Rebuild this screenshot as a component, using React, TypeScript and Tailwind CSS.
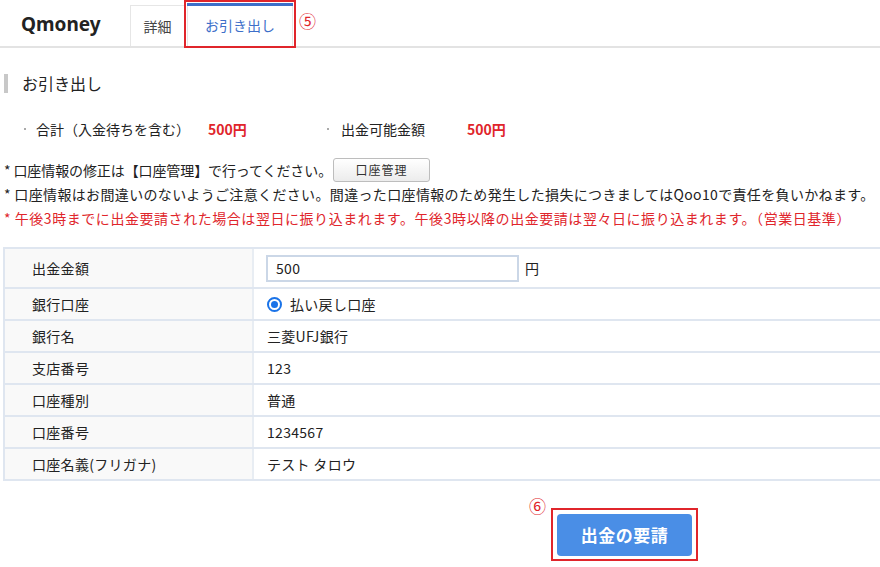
import React from "react";

export default function App() {
  const font = { fontFamily: '"Noto Sans CJK JP", "Noto Sans", sans-serif' };
  const dataRows: [string, string][] = [
    ["銀行名", "三菱UFJ銀行"],
    ["支店番号", "123"],
    ["口座種別", "普通"],
    ["口座番号", "1234567"],
    ["口座名義(フリガナ)", "テスト タロウ"],
  ];
  return (
    <div className="w-[880px] h-[567px] bg-white text-[#222] overflow-hidden" style={font}>
      {/* header */}
      <div className="relative flex items-end h-[48px] border-b-2 border-[#e3e3e3]">
        <div className="w-[130px] pl-[21px] pb-[8px] text-[19px] font-bold text-[#222]" style={{ fontFamily: '"Noto Sans", "Noto Sans CJK JP", sans-serif' }}>
          Qmoney
        </div>
        <div className="h-[41px] w-[54px] border-l border-t border-[#e6e6e6] flex items-center justify-center text-[14px] text-[#444]">
          詳細
        </div>
        <div className="relative h-[46px] w-[112px] flex items-center justify-center">
          <div className="absolute left-[3px] right-[3px] top-[3px] h-[3px] bg-[#3d6fc9]" />
          <div className="absolute left-[3px] right-[3px] top-[6px] bottom-[-2px] bg-white border-x border-[#e6e6e6]" />
          <div className="absolute left-0 right-0 top-0 bottom-[-2px] border-2 border-[#e0252b]" />
          <span className="relative text-[14px] text-[#3d6fc9] mt-[4px]">お引き出し</span>
        </div>
        <span className="absolute left-[299px] top-[8px] text-[17px] text-[#e0252b]">⑤</span>
      </div>

      {/* section title */}
      <div className="flex items-center mt-[25px] h-[20px]">
        <div className="w-[4px] h-[19px] bg-[#c8c8c8] ml-[4px]" />
        <div className="ml-[14px] text-[16px] text-[#222]">お引き出し</div>
      </div>

      {/* summary */}
      <div className="flex items-center mt-[26px] h-[20px] text-[14px]">
        <div className="flex items-center w-[327px]">
          <span className="ml-[24px] w-[2px] h-[2px] bg-[#aaa]" />
          <span className="ml-[10px] w-[172px]">合計（入金待ちを含む）</span>
          <span className="text-[#e0252b] font-bold">500円</span>
        </div>
        <div className="flex items-center">
          <span className="w-[2px] h-[2px] bg-[#aaa]" />
          <span className="ml-[12px] w-[126px]">出金可能金額</span>
          <span className="text-[#e0252b] font-bold">500円</span>
        </div>
      </div>

      {/* notes */}
      <div className="mt-[19px] pl-[4px] text-[14px] tracking-[0.35px] leading-[24px]">
        <div className="flex items-center">
          <span className="tracking-[-0.1px]">* 口座情報の修正は【口座管理】で行ってください。</span>
          <button className="ml-[1px] w-[97px] h-[24px] border border-[#bdbdbd] rounded-[3px] bg-gradient-to-b from-white to-[#ececec] text-[12px] text-[#333] leading-none tracking-[1px]">
            口座管理
          </button>
        </div>
        <div>* 口座情報はお間違いのないようご注意ください。間違った口座情報のため発生した損失につきましてはQoo10で責任を負いかねます。</div>
        <div className="text-[#e0252b] tracking-[0.55px]">* 午後3時までに出金要請された場合は翌日に振り込まれます。午後3時以降の出金要請は翌々日に振り込まれます。（営業日基準）</div>
      </div>

      {/* table */}
      <div className="mt-[17px] ml-[3px] border-y-2 border-l-2 border-[#dfe6f0] text-[14px] tracking-[0.3px]">
        <div className="grid grid-cols-[249px_1fr]">
          <div className="h-[38px] bg-[#f9f9f9] border-r-2 border-[#e8edf3] flex items-center pl-[27px]">出金金額</div>
          <div className="h-[38px] flex items-center pl-[12px]">
            <div className="w-[253px] h-[27px] border-2 border-[#cbd7e7] flex items-center pl-[8px]">500</div>
            <span className="ml-[6px]">円</span>
          </div>
        </div>
        <div className="grid grid-cols-[249px_1fr] border-t-2 border-[#dfe6f0]">
          <div className="h-[30px] bg-[#f9f9f9] border-r-2 border-[#e8edf3] flex items-center pl-[27px]">銀行口座</div>
          <div className="h-[30px] flex items-center pl-[13px]">
            <span className="w-[15px] h-[15px] rounded-full border-2 border-[#1a73e8] flex items-center justify-center">
              <span className="w-[7px] h-[7px] rounded-full bg-[#1a73e8]" />
            </span>
            <span className="ml-[8px]">払い戻し口座</span>
          </div>
        </div>
        {dataRows.map(([l, v]) => (
          <div key={l} className="grid grid-cols-[249px_1fr] border-t-2 border-[#dfe6f0]">
            <div className="h-[30px] bg-[#f9f9f9] border-r-2 border-[#e8edf3] flex items-center pl-[27px]">{l}</div>
            <div className="h-[30px] flex items-center pl-[13px]">{v}</div>
          </div>
        ))}
      </div>

      {/* button */}
      <div className="relative mt-[27px] ml-[551px] w-[147px] h-[53px] border-2 border-[#e0252b] flex items-center justify-center">
        <span className="absolute left-[-24px] top-[-13px] text-[17px] text-[#e0252b] leading-none">⑥</span>
        <button className="w-[135px] h-[42px] rounded-[4px] bg-[#4a8ee6] text-white text-[17px] font-bold tracking-[0.5px]">
          出金の要請
        </button>
      </div>
    </div>
  );
}
